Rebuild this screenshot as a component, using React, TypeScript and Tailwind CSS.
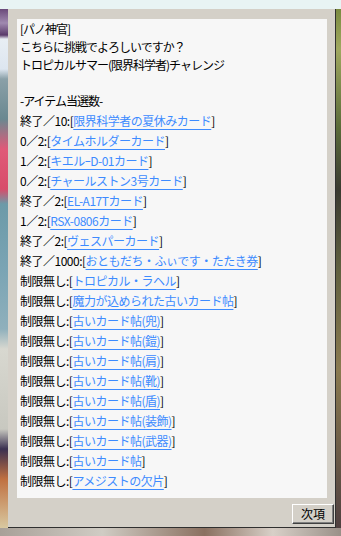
const items: { count: string; name: string }[] = [
  { count: "終了／10:", name: "限界科学者の夏休みカード" },
  { count: "0／2:", name: "タイムホルダーカード" },
  { count: "1／2:", name: "キエルｰD-01カード" },
  { count: "0／2:", name: "チャールストン3号カード" },
  { count: "終了／2:", name: "EL-A17Tカード" },
  { count: "1／2:", name: "RSX-0806カード" },
  { count: "終了／2:", name: "ヴェスパーカード" },
  { count: "終了／1000:", name: "おともだち・ふぃです・たたき券" },
  { count: "制限無し:", name: "トロピカル・ラヘル" },
  { count: "制限無し:", name: "魔力が込められた古いカード帖" },
  { count: "制限無し:", name: "古いカード帖(兜)" },
  { count: "制限無し:", name: "古いカード帖(鎧)" },
  { count: "制限無し:", name: "古いカード帖(肩)" },
  { count: "制限無し:", name: "古いカード帖(靴)" },
  { count: "制限無し:", name: "古いカード帖(盾)" },
  { count: "制限無し:", name: "古いカード帖(装飾)" },
  { count: "制限無し:", name: "古いカード帖(武器)" },
  { count: "制限無し:", name: "古いカード帖" },
  { count: "制限無し:", name: "アメジストの欠片" },
];

const ItemRow = ({ count, name }: { count: string; name: string }) => (
  <div className="h-[20px] leading-[20px] tracking-[-0.5px] whitespace-nowrap">
    {count}[
    <span className="text-[#3d8bff] underline decoration-[#3d8bff] underline-offset-[3px]">
      {name}
    </span>
    ]
  </div>
);

export default function App() {
  return (
    <div
      className="flex h-[536px] w-[341px] flex-col overflow-hidden bg-[#e6f2f2] text-[12px] tracking-[-1px] text-black"
      style={{ fontFamily: '"Noto Sans CJK JP", "Noto Sans", sans-serif' }}
    >
      <div className="h-[9px] shrink-0 bg-[#e8f4f4]" />
      <div className="flex h-[519px] shrink-0">
        <div className="w-[8px] shrink-0 bg-[linear-gradient(to_bottom,#6a4a7a_0px,#a08ab0_14px,#5a3a6a_26px,#e8eef4_30px,#dde6f0_60px,#8aa0a8_70px,#6a8890_110px,#e05a78_140px,#d84c6a_180px,#6c9aa8_195px,#7aa4b4_260px,#8fb0bc_320px,#d8d8d0_340px,#c8c8c0_420px,#3a3050_440px,#c07040_470px,#d8c8a0_519px)]" />
        <div className="flex w-[328px] shrink-0 flex-col border-r border-b border-[#303030] bg-[#d4d0c8]">
          <div className="ml-[9px] mt-[10px] h-[479px] w-[310px] bg-[#f7f7f7] pl-[3px] pt-[1px]">
            <div className="h-[18px] leading-[18px]">[パノ神官]</div>
            <div className="h-[18px] leading-[18px]">こちらに挑戦でよろしいですか？</div>
            <div className="h-[18px] leading-[18px]">トロピカルサマー(限界科学者)チャレンジ</div>
            <div className="h-[18px]" />
            <div className="h-[19px] leading-[18px]">-アイテム当選数-</div>
            {items.map((it, i) => (
              <ItemRow key={i} count={it.count} name={it.name} />
            ))}
          </div>
          <div className="flex justify-end pr-[1px] pt-[6px]">
            <button className="h-[20px] w-[42px] border-t border-l border-t-white border-l-white border-r border-b border-r-[#404040] border-b-[#404040] bg-[#d4d0c8] text-[12px] leading-[18px] tracking-normal shadow-[inset_-1px_-1px_0_#808080]">
              次項
            </button>
          </div>
        </div>
        <div className="w-[5px] shrink-0 bg-[linear-gradient(to_bottom,#7a8a40_0px,#a0a860_40px,#5a6a38_120px,#3a3a30_180px,#606040_260px,#8a7a50_360px,#504040_519px)]" />
      </div>
      <div className="h-[8px] shrink-0 bg-[linear-gradient(to_right,#a8a098,#d0ccc4_30%,#8a7060_60%,#d8d0c8_80%,#9a9088)]" />
    </div>
  );
}
